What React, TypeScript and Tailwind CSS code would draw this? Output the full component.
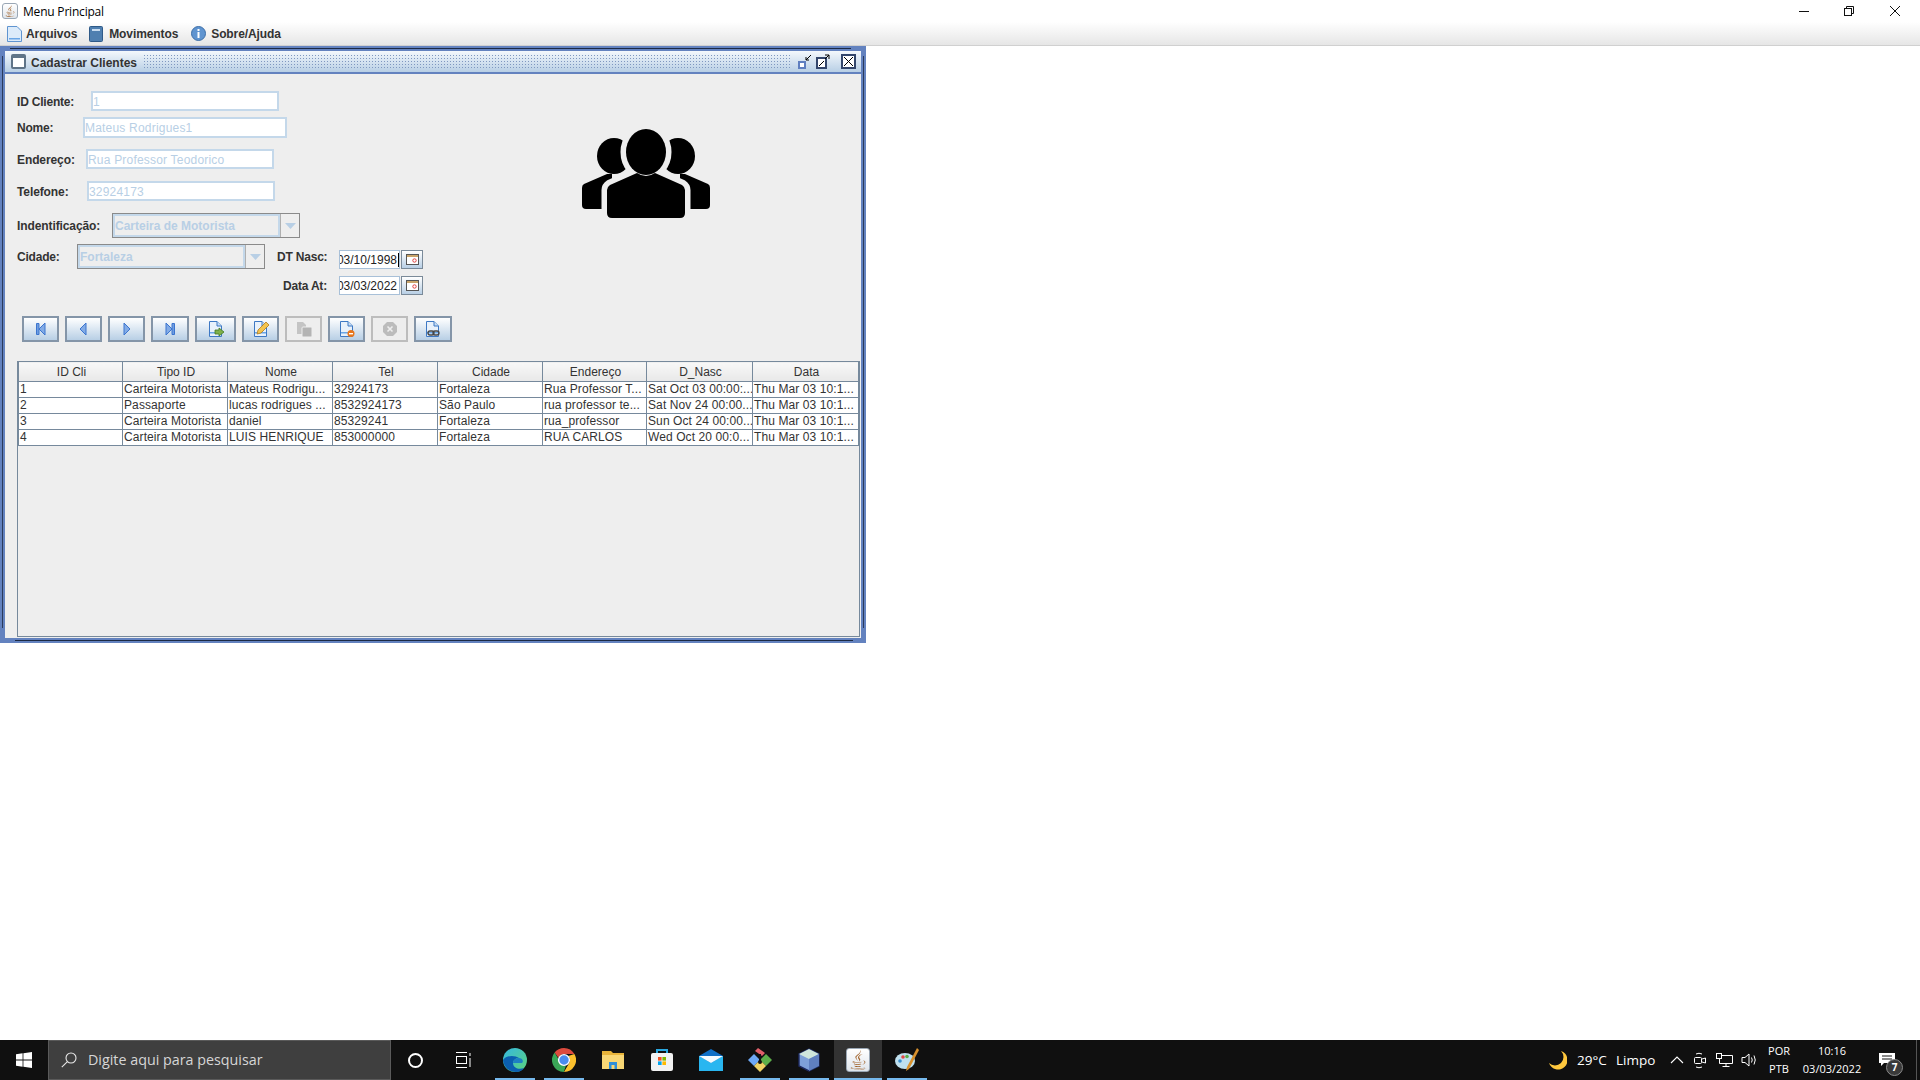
import React from "react";
import { FaJava } from "react-icons/fa";

const uiFont = { fontFamily: '"Liberation Sans", Arial, sans-serif' };

const columns = [
  { title: "ID Cli", width: 104 },
  { title: "Tipo ID", width: 105 },
  { title: "Nome", width: 105 },
  { title: "Tel", width: 105 },
  { title: "Cidade", width: 105 },
  { title: "Endereço", width: 104 },
  { title: "D_Nasc", width: 106 },
  { title: "Data", width: 106 },
];

const rows = [
  ["1", "Carteira Motorista", "Mateus Rodrigu...", "32924173", "Fortaleza", "Rua Professor T...", "Sat Oct 03 00:00:...", "Thu Mar 03 10:1..."],
  ["2", "Passaporte", "lucas rodrigues ...", "8532924173", "São Paulo", "rua professor te...", "Sat Nov 24 00:00...", "Thu Mar 03 10:1..."],
  ["3", "Carteira Motorista", "daniel", "85329241", "Fortaleza", "rua_professor", "Sun Oct 24 00:00...", "Thu Mar 03 10:1..."],
  ["4", "Carteira Motorista", "LUIS HENRIQUE", "853000000", "Fortaleza", "RUA CARLOS", "Wed Oct 20 00:0...", "Thu Mar 03 10:1..."],
];

const JavaTile = ({ size }: { size: number }) => (
  <div
    className="flex items-center justify-center rounded-[3px] border border-[#9aa7b5] bg-gradient-to-b from-white to-[#dfe5ec] text-[#a0622a] shrink-0"
    style={{ width: size, height: size }}
  >
    <FaJava size={size - 4} />
  </div>
);

const DocIcon = ({ children }: { children?: React.ReactNode }) => (
  <svg width="18" height="18" viewBox="0 0 18 18">
    <path d="M2.5 1.5H10L14.5 6V16.5H2.5Z" fill="#e8f1fb" stroke="#3d78c4" />
    <path d="M10 1.5V6H14.5" fill="#c6dcf4" stroke="#3d78c4" />
    <rect x="3" y="12" width="11" height="1.5" fill="#6aa6e6" />
    {children}
  </svg>
);

const NavIcon = ({ d, bar }: { d: string; bar?: string }) => (
  <svg width="14" height="14" viewBox="0 0 14 14">
    <path d={d} fill="#82abe6" stroke="#3b74cf" strokeWidth="1" />
    {bar && <path d={bar} fill="#6e9de0" stroke="#3b74cf" strokeWidth="1" />}
  </svg>
);

const ToolButton = ({
  width,
  gap,
  disabled,
  children,
}: {
  width: string;
  gap: string;
  disabled?: boolean;
  children: React.ReactNode;
}) => (
  <div
    className={`${width} ${gap} h-[26px] flex items-center justify-center border-2 ${
      disabled
        ? "border-[#bdbdbd] bg-[#eeeeee]"
        : "border-[#8495a8] bg-gradient-to-b from-white to-[#b8cfe5]"
    }`}
  >
    {children}
  </div>
);

const TextField = ({ className, value }: { className: string; value: string }) => (
  <div className={`${className} border-2 border-[#c4d8ea] bg-white pt-[1px] text-[12px] leading-[16px] text-[#b8cfe5] flex items-center tracking-[0.2px]`}>
    {value}
  </div>
);

const ComboBox = ({ value, className }: { value: string; className: string }) => (
  <div className={`${className} flex h-[25px] shrink-0 border border-[#8a8a8a]`}>
    <div className="flex-1 border-2 border-[#c4d8ea] text-[12px] font-bold leading-[20px] text-[#b8cfe5]">
      {value}
    </div>
    <div className="flex w-[19px] items-center justify-center border-l border-[#b0b0b0]">
      <svg width="11" height="6" viewBox="0 0 11 6">
        <path d="M0 0H11L5.5 6Z" fill="#b8cfe5" />
      </svg>
    </div>
  </div>
);

const DateField = ({ value, caret }: { value: string; caret?: boolean }) => (
  <div className="flex">
    <div className="flex h-[19px] w-[61px] items-center justify-end overflow-hidden border border-[#a8c0d8] bg-white pt-[1px] text-[12px] text-[#222]">
      <span className="whitespace-nowrap">{value}</span>
      <span className={`ml-[1px] h-[14px] w-[1px] shrink-0 ${caret ? "bg-black" : "bg-white"}`} />
    </div>
    <div className="ml-[1px] flex h-[19px] w-[22px] items-center justify-center border border-[#7a8a99] bg-gradient-to-b from-white to-[#b8cfe5]">
      <svg width="13" height="11" viewBox="0 0 13 11">
        <rect x="0.5" y="0.5" width="12" height="10" fill="#fff" stroke="#555" />
        <rect x="1" y="1" width="11" height="2" fill="#c9a46a" />
        <circle cx="8.5" cy="6.5" r="1.7" fill="none" stroke="#e04040" />
      </svg>
    </div>
  </div>
);

const Barline = ({ className }: { className: string }) => (
  <div className={`${className} h-[2px] bg-[#76b9ed] w-full`} />
);

const TaskIcon = ({
  width,
  active,
  underline,
  children,
}: {
  width: string;
  active?: boolean;
  underline?: boolean;
  children: React.ReactNode;
}) => (
  <div className={`${width} ${active ? "bg-[#333333]" : ""} relative flex h-10 shrink-0 items-center justify-center`}>
    {children}
    {underline && <Barline className="absolute bottom-0 left-0" />}
  </div>
);

const UsersIcon = () => (
  <svg width="128" height="89" viewBox="0 0 128 89" className="mt-[55px] shrink-0">
    <ellipse cx="32" cy="27" rx="17" ry="18" />
    <path d="M25 45L2 55Q0 56 0 59V76Q0 80 4 80H30V45Z" />
    <ellipse cx="96" cy="27" rx="17" ry="18" />
    <path d="M103 45L126 55Q128 56 128 59V76Q128 80 124 80H98V45Z" />
    <g stroke="#eeeeee" strokeWidth="11">
      <ellipse cx="64" cy="23" rx="20" ry="23" />
      <path d="M55 44L28 56Q25 58 25 61V84Q25 89 30 89H98Q103 89 103 84V61Q103 58 100 56L73 44Q64 50 55 44Z" />
    </g>
    <ellipse cx="64" cy="23" rx="20" ry="23" />
    <path d="M55 44L28 56Q25 58 25 61V84Q25 89 30 89H98Q103 89 103 84V61Q103 58 100 56L73 44Q64 50 55 44Z" />
  </svg>
);

const InternalFrame = () => (
  <div className="h-[597px] w-[866px] border-x-[5px] border-b-[5px] border-t-[5px] border-[#6382bf] flex flex-col relative">
    <div className="absolute -top-[3px] left-[5px] right-[10px] h-[1px] bg-[#1c2a44]" />
    <div className="absolute -bottom-[3px] left-[10px] right-[8px] h-[1px] bg-[#1c2a44]" />
    <div className="absolute -left-[3px] top-[5px] bottom-[10px] w-[1px] bg-[#2a3a5c]" />
    <div className="absolute -right-[3px] top-[5px] bottom-[10px] w-[1px] bg-[#2a3a5c]" />
    <div className="flex h-[23px] shrink-0 items-center border-b-2 border-[#6382bf] bg-gradient-to-b from-[#f4f8fc] to-[#b8cfe5] pl-[6px] pr-[5px]">
      <svg width="15" height="15" viewBox="0 0 15 15" className="shrink-0">
        <rect x="1" y="1" width="13" height="13" rx="1" fill="#fff" stroke="#5f7488" strokeWidth="2" />
        <rect x="2" y="2" width="11" height="2" fill="#5f7488" />
      </svg>
      <span className="ml-[5px] pt-[2px] text-[12px] font-bold text-[#333]">Cadastrar Clientes</span>
      <div className="ml-[6px] h-[15px] flex-1 bg-[radial-gradient(#7f98c0_0.7px,transparent_0.8px)] bg-[length:3px_3px]" />
      <svg width="14" height="15" viewBox="0 0 14 15" className="ml-[6px] shrink-0">
        <rect x="1" y="8" width="6" height="6" fill="#fff" stroke="#5f7fc0" strokeWidth="2" />
        <path d="M13 1L8 6M8 3V6H11" fill="none" stroke="#000" />
      </svg>
      <svg width="14" height="15" viewBox="0 0 14 15" className="ml-[4px] shrink-0">
        <rect x="1" y="4" width="9" height="10" fill="#fff" stroke="#33466b" strokeWidth="2" />
        <path d="M3 12L8 7" stroke="#000" />
        <path d="M9 1H13V5M13 1L9 5" fill="none" stroke="#000" />
      </svg>
      <svg width="15" height="15" viewBox="0 0 15 15" className="ml-[11px] shrink-0">
        <rect x="1" y="1" width="13" height="13" fill="#fff" stroke="#33466b" strokeWidth="2" />
        <path d="M3 3L12 12M12 3L3 12" stroke="#000" />
      </svg>
    </div>

    <div className="flex min-h-0 flex-1 flex-col bg-[#eeeeee] text-[12px] text-[#333]">
      <div className="flex">
        <div className="w-[577px] shrink-0 pl-[12px]">
          <div className="mt-[17px] flex items-center">
            <label className="w-[74px] pt-[1px] font-bold tracking-[-0.2px]">ID Cliente:</label>
            <TextField className="h-[20px] w-[188px]" value="1" />
          </div>
          <div className="mt-[6px] flex items-center">
            <label className="w-[66px] font-bold tracking-[-0.2px]">Nome:</label>
            <TextField className="h-[21px] w-[204px]" value="Mateus Rodrigues1" />
          </div>
          <div className="mt-[11px] flex items-center">
            <label className="w-[69px] pt-[1px] font-bold tracking-[-0.1px]">Endereço:</label>
            <TextField className="h-[20px] w-[188px]" value="Rua Professor Teodorico" />
          </div>
          <div className="mt-[12px] flex items-center">
            <label className="w-[70px] pt-[1px] font-bold tracking-[-0.1px]">Telefone:</label>
            <TextField className="h-[20px] w-[188px]" value="32924173" />
          </div>
          <div className="mt-[12px] flex items-center">
            <label className="w-[95px] font-bold tracking-[-0.1px]">Indentificação:</label>
            <ComboBox className="w-[188px]" value="Carteira de Motorista" />
          </div>
          <div className="mt-[6px] flex items-center">
            <label className="w-[60px] font-bold tracking-[-0.2px]">Cidade:</label>
            <ComboBox className="w-[188px]" value="Fortaleza" />
            <label className="ml-[12px] w-[62px] font-bold tracking-[-0.2px]">DT Nasc:</label>
            <div className="mt-[5px]">
              <DateField value="03/10/1998" caret />
            </div>
          </div>
          <div className="mt-[7px] flex items-center">
            <label className="ml-[266px] w-[56px] pt-[1px] font-bold tracking-[-0.2px]">Data At:</label>
            <DateField value="03/03/2022" />
          </div>
          <div className="ml-[5px] mt-[21px] flex">
            <ToolButton width="w-[37px]" gap="">
              <NavIcon d="M5 7L11 1V13Z" bar="M2.5 1.5H5V12.5H2.5Z" />
            </ToolButton>
            <ToolButton width="w-[37px]" gap="ml-[6px]">
              <NavIcon d="M3 7L9 1V13Z" />
            </ToolButton>
            <ToolButton width="w-[37px]" gap="ml-[6px]">
              <NavIcon d="M10 7L4 1V13Z" />
            </ToolButton>
            <ToolButton width="w-[38px]" gap="ml-[6px]">
              <NavIcon d="M9 7L3 1V13Z" bar="M9 1.5H11.5V12.5H9Z" />
            </ToolButton>
            <ToolButton width="w-[41px]" gap="ml-[6px]">
              <DocIcon>
                <path d="M8 10H12V8L17 12L12 16V14H8Z" fill="#7fb04a" stroke="#3f7a22" strokeWidth="0.8" />
              </DocIcon>
            </ToolButton>
            <ToolButton width="w-[37px]" gap="ml-[6px]">
              <DocIcon>
                <path d="M5 14L6 10L14 2L17 5L9 13Z" fill="#f4c44e" stroke="#b07a1c" strokeWidth="0.8" />
              </DocIcon>
            </ToolButton>
            <ToolButton width="w-[37px]" gap="ml-[6px]" disabled>
              <svg width="18" height="18" viewBox="0 0 18 18">
                <path d="M2 2H8L11 5V14H2Z" fill="#c4c4c4" />
                <rect x="7" y="7" width="10" height="10" rx="1" fill="#b4b4b4" stroke="#eeeeee" />
              </svg>
            </ToolButton>
            <ToolButton width="w-[37px]" gap="ml-[6px]">
              <DocIcon>
                <circle cx="13" cy="13.5" r="3.5" fill="#e8761c" />
                <rect x="11" y="13" width="4" height="1.4" fill="#fff" />
              </DocIcon>
            </ToolButton>
            <ToolButton width="w-[37px]" gap="ml-[6px]" disabled>
              <svg width="16" height="16" viewBox="0 0 16 16">
                <path d="M5 1H11L15 5V11L11 15H5L1 11V5Z" fill="#bcbcbc" />
                <path d="M5.5 5.5L10.5 10.5M10.5 5.5L5.5 10.5" stroke="#eeeeee" strokeWidth="1.6" />
              </svg>
            </ToolButton>
            <ToolButton width="w-[38px]" gap="ml-[6px]">
              <DocIcon>
                <rect x="4" y="11" width="6" height="4" rx="2" fill="none" stroke="#444" strokeWidth="1.3" />
                <rect x="9" y="11" width="6" height="4" rx="2" fill="none" stroke="#444" strokeWidth="1.3" />
              </DocIcon>
            </ToolButton>
          </div>
        </div>
        <UsersIcon />
      </div>

      <div className="mb-[1px] ml-[12px] mr-[1px] mt-[19px] min-h-0 flex-1 border border-[#76899c] border-t-0">
        <table className="table-fixed border-collapse text-[12px] text-[#333]" style={{ width: 840 }}>
          <colgroup>
            {columns.map((column) => (
              <col key={column.title} style={{ width: column.width }} />
            ))}
          </colgroup>
          <thead>
            <tr className="h-[20px]">
              {columns.map((column) => (
                <th
                  key={column.title}
                  className="border border-[#76899c] bg-gradient-to-b from-[#f8f8f8] to-[#e8e8e8] p-0 pl-[2px] text-center font-normal"
                >
                  {column.title}
                </th>
              ))}
            </tr>
          </thead>
          <tbody>
            {rows.map((row) => (
              <tr key={row[0]} className="h-[16px] bg-white">
                {row.map((cell, index) => (
                  <td
                    key={index}
                    className="overflow-hidden whitespace-nowrap border border-[#76899c] p-0 pl-[1px] leading-[15px] tracking-[0.1px]"
                  >
                    {cell}
                  </td>
                ))}
              </tr>
            ))}
          </tbody>
        </table>
      </div>
    </div>
  </div>
);

const Taskbar = () => (
  <div
    className="flex h-10 shrink-0 items-center bg-[#101010] text-white"
    style={{ fontFamily: '"Open Sans", "Noto Sans", sans-serif' }}
  >
    <div className="flex h-10 w-[48px] shrink-0 items-center justify-center">
      <svg width="16" height="16" viewBox="0 0 16 16">
        <path d="M0 2.3L6.6 1.3V7.6H0ZM7.4 1.2L16 0V7.6H7.4ZM0 8.4H6.6V14.7L0 13.7ZM7.4 8.4H16V16L7.4 14.8Z" fill="#fff" />
      </svg>
    </div>
    <div className="flex h-10 w-[343px] shrink-0 items-center border border-[#5a5a5a] bg-[#3f3f3f] pl-[12px] text-[14.3px] text-[#d6d6d6]">
      <svg width="16" height="16" viewBox="0 0 16 16" fill="none" stroke="#e8e8e8" strokeWidth="1.1">
        <circle cx="10" cy="6" r="5" />
        <path d="M6.4 9.6L0.8 15.2" />
      </svg>
      <span className="ml-[11px]">Digite aqui para pesquisar</span>
    </div>
    <div className="flex h-10 w-[48px] shrink-0 items-center justify-center">
      <div className="h-[15px] w-[15px] rounded-full border-2 border-white" />
    </div>
    <div className="flex h-10 w-[48px] shrink-0 items-center justify-center">
      <svg width="16" height="16" viewBox="0 0 16 16" fill="none" stroke="#fff">
        <path d="M1 .5H12M1 15.5H12" />
        <rect x="1.5" y="4.5" width="10" height="7" />
        <path d="M15 1V4M15 6V15" />
      </svg>
    </div>

    <div className="ml-[8px] flex">
      <TaskIcon width="w-[40px] mr-[9px]" underline>
        <svg width="24" height="24" viewBox="0 0 24 24">
          <defs>
            <linearGradient id="edgeA" x1="0" y1="0" x2="1" y2="1">
              <stop offset="0" stopColor="#35b8e0" />
              <stop offset="1" stopColor="#5cd37c" />
            </linearGradient>
          </defs>
          <circle cx="12" cy="12" r="12" fill="url(#edgeA)" />
          <path d="M0 12C1 20 7 24 13 24C17 24 20 22 21 20C16 22 10 20 10 15C10 12 13 10 16 10C12 7 3 7 0 12Z" fill="#0b5fb0" />
          <path d="M10 15C10 12 13 10 16 10C19 10 21 13 19 15H13C12 15 11 15 10 15Z" fill="#1d7fc4" />
        </svg>
      </TaskIcon>
      <TaskIcon width="w-[40px] mr-[9px]" underline>
        <svg width="24" height="24" viewBox="0 0 24 24">
          <path d="M12 0A12 12 0 0 1 22.4 6H12A6 6 0 0 0 6.4 9.8L2.6 4.6A12 12 0 0 1 12 0Z" fill="#dd4b3e" />
          <path d="M22.4 6A12 12 0 0 1 12 24L17.2 15A6 6 0 0 0 16.2 8Z" fill="#fbc02d" />
          <path d="M2.6 4.6L7 12A6 6 0 0 0 14 17.6L11.8 24A12 12 0 0 1 2.6 4.6Z" fill="#3aa757" />
          <circle cx="12" cy="12" r="5.4" fill="#4a8cf0" stroke="#fff" strokeWidth="1.4" />
        </svg>
      </TaskIcon>
      <TaskIcon width="w-[40px] mr-[9px]">
        <svg width="22" height="20" viewBox="0 0 22 20">
          <path d="M0 1H9L11 3H22V19H0Z" fill="#e8b43a" />
          <path d="M0 5H22V19H0Z" fill="#f8d775" />
          <path d="M7 12H15V19H12.5V15H9.5V19H7Z" fill="#2f8fd8" />
        </svg>
      </TaskIcon>
      <TaskIcon width="w-[40px] mr-[9px]">
        <svg width="24" height="24" viewBox="0 0 24 24">
          <path d="M7 6V2H17V6" fill="none" stroke="#2aa8e0" strokeWidth="2" />
          <rect x="1" y="5" width="22" height="18" rx="2" fill="#f2f2f2" />
          <rect x="8" y="9" width="3.6" height="3.6" fill="#f25022" />
          <rect x="12.4" y="9" width="3.6" height="3.6" fill="#7fba00" />
          <rect x="8" y="13.4" width="3.6" height="3.6" fill="#00a4ef" />
          <rect x="12.4" y="13.4" width="3.6" height="3.6" fill="#ffb900" />
        </svg>
      </TaskIcon>
      <TaskIcon width="w-[40px] mr-[9px]">
        <svg width="24" height="22" viewBox="0 0 24 22">
          <path d="M0 7L12 0L24 7V22H0Z" fill="#0f6fc6" />
          <path d="M0 7L12 14L24 7V22H0Z" fill="#29b6f0" />
          <path d="M0 7L12 14L24 7" fill="#f4fbff" />
        </svg>
      </TaskIcon>
      <TaskIcon width="w-[40px] mr-[9px]" underline>
        <svg width="24" height="24" viewBox="0 0 24 24">
          <path d="M0 12L6 6L12 12L6 18Z" fill="#6ea8f5" />
          <path d="M12 12L18 6L24 12L18 18Z" fill="#5cae4a" />
          <path d="M6 18L12 12L18 18L12 24Z" fill="#f0d264" />
          <path d="M7 3L10 0L17 5L14 8Z" fill="#e0606a" />
          <path d="M12 6V14" stroke="#101010" strokeWidth="2" />
          <circle cx="12" cy="14" r="2" fill="#101010" />
        </svg>
      </TaskIcon>
      <TaskIcon width="w-[40px] mr-[5px]" underline>
        <svg width="22" height="24" viewBox="0 0 22 24">
          <path d="M11 1L21 6V18L11 23L1 18V6Z" fill="#7ea0d8" stroke="#1e2a60" strokeWidth="1.4" />
          <path d="M11 1L21 6L11 11L1 6Z" fill="#cfe6dc" />
          <path d="M11 11L21 6V18L11 23Z" fill="#5f7fc0" />
        </svg>
      </TaskIcon>
      <TaskIcon width="w-[48px] mr-[5px]" active underline>
        <JavaTile size={24} />
      </TaskIcon>
      <TaskIcon width="w-[40px]" underline>
        <svg width="24" height="26" viewBox="0 0 24 26">
          <ellipse cx="10" cy="14" rx="10" ry="8" fill="#bfe0ee" />
          <circle cx="5" cy="14" r="1.8" fill="#3a8fd0" />
          <circle cx="8" cy="10" r="1.8" fill="#e04848" />
          <circle cx="12" cy="9.5" r="1.8" fill="#5cae4a" />
          <path d="M22 1L24 3L14 22L11 24L12 20Z" fill="#d8902c" />
        </svg>
      </TaskIcon>
    </div>

    <div className="ml-auto flex h-10 items-center">
      <svg width="18" height="19" viewBox="0 0 18 19">
        <path d="M12 0A9.5 9.5 0 1 1 0 12A8 8 0 0 0 12 0Z" fill="#ffc83d" />
      </svg>
      <span className="ml-[10px] w-[39px] whitespace-nowrap text-[13.5px]">29°C</span>
      <span className="w-[54px] whitespace-nowrap text-[13.5px]">Limpo</span>
      <svg width="14" height="8" viewBox="0 0 14 8" fill="none" stroke="#fff" strokeWidth="1.1">
        <path d="M1 7L7 1L13 7" />
      </svg>
      <svg width="12" height="17" viewBox="0 0 12 17" fill="none" stroke="#fff" className="ml-[10px]">
        <rect x="0.5" y="5.5" width="7" height="6" rx="1" />
        <path d="M8 7L11.5 6V11L8 10M2 2Q5 0.5 8 2M2 15Q5 16.5 8 15" />
      </svg>
      <svg width="17" height="14" viewBox="0 0 17 14" fill="none" stroke="#fff" className="ml-[10px]">
        <rect x="0.5" y="0.5" width="5" height="5" />
        <path d="M6 2.5H16.5V10.5H3.5V6M10 11V13.5M6.5 13.5H13.5" />
      </svg>
      <svg width="16" height="14" viewBox="0 0 16 14" fill="none" stroke="#fff" className="ml-[8px]">
        <path d="M1 4.5H4L8 1V13L4 9.5H1ZM10.5 4.5Q12 7 10.5 9.5M13 2.5Q15.5 7 13 11.5" />
      </svg>
      <div className="ml-[5px] flex w-[34px] flex-col text-center text-[11px] leading-[18px]">
        <span>POR</span>
        <span>PTB</span>
      </div>
      <div className="ml-[1px] flex w-[70px] flex-col text-center text-[11px] leading-[18px]">
        <span>10:16</span>
        <span>03/03/2022</span>
      </div>
      <div className="relative ml-[2px] flex h-10 w-[47px] items-center justify-center">
        <svg width="16" height="13" viewBox="0 0 16 13" className="mb-[2px] mr-[11px]">
          <path d="M0 0H16V10H5L2 13V10H0Z" fill="#fff" />
          <path d="M3 3H13M3 6H13" stroke="#101010" />
        </svg>
        <span className="absolute bottom-[4px] right-[13px] flex h-[17px] w-[17px] items-center justify-center rounded-full border border-[#8a8a8a] bg-[#3a3a3a] text-[10px] font-bold">
          7
        </span>
      </div>
      <div className="h-10 w-[1px] bg-[#555]" />
      <div className="h-10 w-[3px]" />
    </div>
  </div>
);

export default function App() {
  return (
    <div className="flex h-[1080px] w-[1920px] flex-col overflow-hidden bg-white" style={uiFont}>
      <div className="flex h-[22px] shrink-0 items-center bg-white pl-[2px]">
        <JavaTile size={16} />
        <span
          className="ml-[5px] pt-[2px] text-[12px] tracking-[-0.2px] text-black"
          style={{ fontFamily: '"Open Sans", "Noto Sans", sans-serif' }}
        >
          Menu Principal
        </span>
        <div className="ml-auto flex items-center">
          <svg width="10" height="10" viewBox="0 0 10 10" stroke="#111" className="mr-[35px]">
            <path d="M0 5.5H10" />
          </svg>
          <svg width="10" height="10" viewBox="0 0 10 10" fill="none" stroke="#111" className="mr-[36px]">
            <rect x="0.5" y="2.5" width="7" height="7" />
            <path d="M2.5 2.5V0.5H9.5V7.5H7.5" />
          </svg>
          <svg width="10" height="10" viewBox="0 0 10 10" stroke="#111" className="mr-[20px]">
            <path d="M0 0L10 10M10 0L0 10" />
          </svg>
        </div>
      </div>

      <div className="flex h-[24px] shrink-0 items-center border-b border-[#d0d0d0] bg-gradient-to-b from-white to-[#e6e6e6] pl-[7px] text-[12px] font-bold tracking-[-0.1px] text-[#333]">
        <svg width="15" height="16" viewBox="0 0 15 16">
          <path d="M0.5 0.5H10L14.5 5V15.5H0.5Z" fill="#dcebfa" stroke="#5f94d0" />
          <rect x="2" y="12" width="11" height="1.5" fill="#6aa6e6" />
        </svg>
        <span className="ml-[4px]">Arquivos</span>
        <svg width="14" height="16" viewBox="0 0 14 16" className="ml-[12px]">
          <rect x="0.5" y="0.5" width="13" height="15" rx="1" fill="#4f7fb0" stroke="#2f5a88" />
          <rect x="3" y="3" width="8" height="2" fill="#c8dcf0" />
        </svg>
        <span className="ml-[6px]">Movimentos</span>
        <svg width="15" height="15" viewBox="0 0 15 15" className="ml-[13px]">
          <circle cx="7.5" cy="7.5" r="7" fill="#5f94d0" stroke="#3d6fa8" />
          <rect x="6.5" y="6" width="2" height="6" fill="#fff" />
          <rect x="6.5" y="3" width="2" height="2" fill="#fff" />
        </svg>
        <span className="ml-[5px]">Sobre/Ajuda</span>
      </div>

      <div className="min-h-0 flex-1 bg-white">
        <InternalFrame />
      </div>

      <Taskbar />
    </div>
  );
}
